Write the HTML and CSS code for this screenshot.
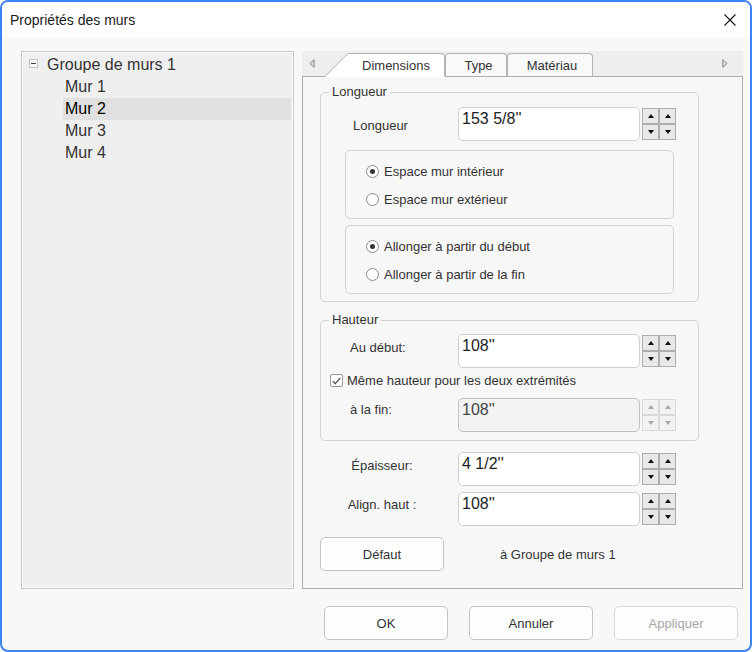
FILE: index.html
```html
<!DOCTYPE html>
<html lang="fr">
<head>
  <meta charset="UTF-8">
  <title>Propriétés des murs</title>
  <link rel="stylesheet" href="styles.css">
</head>
<body>
  <div class="window">
    <div class="titlebar">
      <span class="title">Propriétés des murs</span>
      <svg class="close" width="12" height="12" viewBox="0 0 12 12">
        <path d="M0.5 0.5L11.5 11.5M11.5 0.5L0.5 11.5" stroke="#1a1a1a" stroke-width="1.1" fill="none"/>
      </svg>
    </div>

    <div class="main">
      <!-- Arborescence -->
      <div class="tree">
        <div class="tree-group"><span class="toggle"></span><span class="group-name">Groupe de murs 1</span></div>
        <div class="tree-item">Mur 1</div>
        <div class="tree-item selected">Mur 2</div>
        <div class="tree-item">Mur 3</div>
        <div class="tree-item">Mur 4</div>
      </div>

      <!-- Onglets -->
      <div class="props">
        <div class="tabstrip">
          <div class="tab-arrow left">
            <svg width="6" height="9" viewBox="0 0 6 9"><path d="M5.2 0.6L0.8 4.5L5.2 8.4Z" fill="#d8d8d8" stroke="#8e8e8e" stroke-width="1"/></svg>
          </div>
          <svg class="tab-slant" width="23" height="24" viewBox="0 0 23 24">
            <polygon points="0,24 23,0.5 23,24" fill="#fff"/>
            <line x1="0" y1="23.5" x2="23" y2="0.5" stroke="#b4b4b4" stroke-width="1"/>
          </svg>
          <div class="tab active">Dimensions</div>
          <div class="tab tab-type">Type</div>
          <div class="tab tab-mat">Matériau</div>
          <div class="tab-fill">
            <svg width="6" height="9" viewBox="0 0 6 9"><path d="M0.8 0.6L5.2 4.5L0.8 8.4Z" fill="#d8d8d8" stroke="#8e8e8e" stroke-width="1"/></svg>
          </div>
        </div>

        <div class="page">
          <fieldset class="group">
            <legend>Longueur</legend>
            <div class="row first">
              <span class="lbl lbl-len">Longueur</span>
              <div class="field">153 5/8''</div>
              <div class="spin"><span class="up"></span><span class="up"></span><span class="dn"></span><span class="dn"></span></div>
            </div>
            <div class="options">
              <div class="radio checked"><span class="dot"></span>Espace mur intérieur</div>
              <div class="radio"><span class="dot"></span>Espace mur extérieur</div>
            </div>
            <div class="options second">
              <div class="radio checked"><span class="dot"></span>Allonger à partir du début</div>
              <div class="radio"><span class="dot"></span>Allonger à partir de la fin</div>
            </div>
          </fieldset>

          <fieldset class="group height">
            <legend>Hauteur</legend>
            <div class="row first-h">
              <span class="lbl lbl-h">Au début:</span>
              <div class="field">108''</div>
              <div class="spin"><span class="up"></span><span class="up"></span><span class="dn"></span><span class="dn"></span></div>
            </div>
            <div class="check-row">
              <span class="checkbox">
                <svg width="9" height="8" viewBox="0 0 9 8"><path d="M0.8 4.2L3.3 6.6L8.2 1" stroke="#555" stroke-width="1.4" fill="none"/></svg>
              </span>
              Même hauteur pour les deux extrémités
            </div>
            <div class="row end-h">
              <span class="lbl lbl-h lbl-fin">à la fin:</span>
              <div class="field disabled">108''</div>
              <div class="spin disabled"><span class="up"></span><span class="up"></span><span class="dn"></span><span class="dn"></span></div>
            </div>
          </fieldset>

          <div class="row outer thick">
            <span class="lbl lbl-c">Épaisseur:</span>
            <div class="field">4 1/2''</div>
            <div class="spin"><span class="up"></span><span class="up"></span><span class="dn"></span><span class="dn"></span></div>
          </div>
          <div class="row outer align">
            <span class="lbl lbl-c lbl-align">Align. haut :</span>
            <div class="field">108''</div>
            <div class="spin"><span class="up"></span><span class="up"></span><span class="dn"></span><span class="dn"></span></div>
          </div>

          <div class="default-row">
            <button class="btn">Défaut</button>
            <span class="default-note">à Groupe de murs 1</span>
          </div>
        </div>
      </div>
    </div>

    <div class="footer">
      <button class="btn">OK</button>
      <button class="btn">Annuler</button>
      <button class="btn" disabled>Appliquer</button>
    </div>
  </div>
</body>
</html>
```

FILE: styles.css
```css
/* Base */
* {
  box-sizing: border-box;
}

body {
  margin: 0;
  font-family: "Liberation Sans", Arial, sans-serif;
  color: #333;
  background: #fff;
}

.window {
  width: 752px;
  height: 652px;
  border: 2px solid #3c84f4;
  border-radius: 8px;
  overflow: hidden;
  display: flex;
  flex-direction: column;
  background: #f8f8f8;
}

/* Barre de titre */
.titlebar {
  height: 36px;
  flex-shrink: 0;
  background: #fff;
  display: flex;
  align-items: center;
  justify-content: space-between;
  padding: 0 14px 0 8px;
  font-size: 14px;
  color: #1a1a1a;
}

.close {
  margin-top: -1px;
}

/* Zone principale */
.main {
  height: 551px;
  flex-shrink: 0;
  display: flex;
  gap: 8px;
  padding: 13px 7px 0 19px;
}

/* Arborescence */
.tree {
  width: 273px;
  flex-shrink: 0;
  border: 1px solid #c9c9c9;
  background: #efefef;
  box-shadow: inset 0 0 0 1px #fafafa;
  padding-top: 2px;
  font-size: 16px;
  color: #333;
}

.tree-group {
  height: 22px;
  display: flex;
  align-items: center;
  padding-left: 7px;
}

.toggle {
  width: 9px;
  height: 9px;
  border: 1px solid #c6c6c6;
  background: #f8f8f8;
  display: flex;
  align-items: center;
  justify-content: center;
  margin-top: -3px;
}

.toggle::before {
  content: "";
  width: 5px;
  height: 1px;
  background: #444;
}

.group-name {
  margin-left: 9px;
}

.tree-item {
  height: 22px;
  line-height: 22px;
  margin: 0 2px 0 41px;
  padding-left: 2px;
}

.tree-item.selected {
  background: #e0e0e0;
  color: #000;
}

/* Onglets */
.props {
  flex: 1;
  display: flex;
  flex-direction: column;
}

.tabstrip {
  height: 26px;
  flex-shrink: 0;
  display: flex;
  align-items: flex-end;
  background: #eee;
  font-size: 13px;
}

.tab-arrow {
  width: 23px;
  height: 26px;
  border-bottom: 1px solid #adadad;
  display: flex;
  align-items: center;
  padding-left: 7px;
}

.tab-slant {
  display: block;
  flex-shrink: 0;
}

.tab {
  height: 24px;
  display: flex;
  align-items: center;
  justify-content: center;
  border: 1px solid #b4b4b4;
  border-bottom-color: #adadad;
  border-radius: 4px 4px 0 0;
  background: #f9f9f9;
  color: #333;
  padding-top: 1px;
}

.tab.active {
  width: 97px;
  background: #fff;
  border-left: none;
  border-top-left-radius: 0;
  border-bottom-color: #fff;
}

.tab-type {
  width: 62px;
  padding-left: 5px;
}

.tab-mat {
  width: 86px;
  padding-left: 4px;
}

.tab-fill {
  flex: 1;
  height: 26px;
  border-bottom: 1px solid #adadad;
  display: flex;
  align-items: center;
  justify-content: flex-end;
  padding-right: 15px;
}

/* Page Dimensions */
.page {
  flex: 1;
  border: 1px solid #adadad;
  border-top: none;
  background: #f7f7f7;
  padding: 7px 0 0 17px;
  font-size: 13px;
}

.group {
  width: 379px;
  margin: 0;
  padding: 0 0 7px 0;
  border: 1px solid #d2d2d2;
  border-radius: 5px;
}

.group legend {
  margin-left: 8px;
  padding: 0 3px;
  line-height: 16px;
  font-size: 13px;
  color: #333;
}

.group.height {
  margin-top: 10px;
  padding-bottom: 8px;
}

.row {
  height: 34px;
  display: flex;
  align-items: center;
}

.row.first {
  margin-top: 7px;
}

.row.first-h {
  margin-top: 6px;
}

.row.end-h {
  margin-top: 9px;
}

.row.thick {
  margin-top: 11px;
}

.row.align {
  margin-top: 6px;
}

.lbl {
  width: 137px;
  flex-shrink: 0;
  padding-bottom: 8px;
}

.lbl-len {
  padding: 3px 0 0 32px;
}

.lbl-h {
  padding-left: 29px;
}

.lbl-fin {
  padding-bottom: 12px;
}

.lbl-c {
  width: 124px;
  margin-right: 14px;
  text-align: center;
  padding-bottom: 7px;
}

.lbl-align {
  padding-bottom: 9px;
}

.field {
  width: 182px;
  height: 34px;
  background: #fff;
  border: 1px solid #cfcfcf;
  border-radius: 5px;
  padding: 2px 0 0 3px;
  font-size: 16px;
  line-height: 18px;
  color: #222;
}

.field.disabled {
  background: #f3f3f3;
  border-color: #c2c2c2;
  color: #444;
}

/* Flèches haut / bas */
.spin {
  margin-left: 2px;
  display: grid;
  grid-template-columns: 17px 17px;
  grid-template-rows: 16px 16px;
}

.spin span {
  border: 1px solid #adadad;
  background: #e8e8e8;
  display: flex;
  align-items: center;
  justify-content: center;
}

.spin .up::after {
  content: "";
  border-left: 3.5px solid transparent;
  border-right: 3.5px solid transparent;
  border-bottom: 4px solid #111;
}

.spin .dn::after {
  content: "";
  border-left: 3.5px solid transparent;
  border-right: 3.5px solid transparent;
  border-top: 4px solid #111;
}

.spin.disabled span {
  background: #f2f2f2;
  border-color: #d9d9d9;
}

.spin.disabled .up::after {
  border-bottom-color: #a8a8a8;
}

.spin.disabled .dn::after {
  border-top-color: #a8a8a8;
}

/* Boutons radio */
.options {
  width: 329px;
  height: 69px;
  margin: 9px 0 0 24px;
  border: 1px solid #d2d2d2;
  border-radius: 5px;
  padding: 6px 0 0 20px;
}

.options.second {
  margin-top: 6px;
}

.radio {
  height: 28px;
  display: flex;
  align-items: center;
  gap: 5px;
}

.radio .dot {
  width: 13px;
  height: 13px;
  border: 1px solid #8c8c8c;
  border-radius: 50%;
  background: #fff;
  display: flex;
  align-items: center;
  justify-content: center;
}

.radio.checked .dot::after {
  content: "";
  width: 5px;
  height: 5px;
  border-radius: 50%;
  background: #333;
}

/* Case à cocher */
.check-row {
  height: 17px;
  margin: 4px 0 0 9px;
  display: flex;
  align-items: center;
  gap: 4px;
}

.checkbox {
  width: 13px;
  height: 13px;
  border: 1px solid #999;
  border-radius: 2px;
  background: #fff;
  display: flex;
  align-items: center;
  justify-content: center;
}

/* Boutons */
.btn {
  width: 124px;
  height: 34px;
  font-family: "Liberation Sans", Arial, sans-serif;
  font-size: 13px;
  color: #333;
  background: #fdfdfd;
  border: 1px solid #c4c4c4;
  border-radius: 5px;
  padding: 0;
}

.btn:disabled {
  color: #a6a6a6;
  border-color: #d9d9d9;
}

.default-row {
  margin-top: 11px;
  display: flex;
  align-items: center;
}

.default-note {
  margin-left: 56px;
  color: #333;
}

.footer {
  flex: 1;
  display: flex;
  justify-content: flex-end;
  align-items: flex-start;
  gap: 21px;
  padding: 17px 12px 0 0;
}
```
